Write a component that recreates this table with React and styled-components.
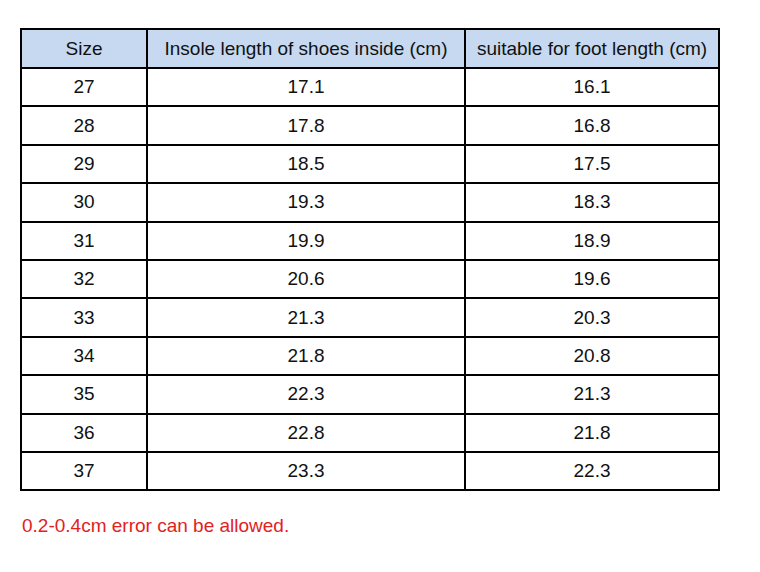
import styled, { createGlobalStyle } from "styled-components";

const GlobalStyle = createGlobalStyle`
body {
  margin: 0;
  background: #fff;
  font-family: "Liberation Sans", Arial, sans-serif;
}
`;

const rows = [
  ["27", "17.1", "16.1"],
  ["28", "17.8", "16.8"],
  ["29", "18.5", "17.5"],
  ["30", "19.3", "18.3"],
  ["31", "19.9", "18.9"],
  ["32", "20.6", "19.6"],
  ["33", "21.3", "20.3"],
  ["34", "21.8", "20.8"],
  ["35", "22.3", "21.3"],
  ["36", "22.8", "21.8"],
  ["37", "23.3", "22.3"],
];

function App() {
  return (
    <Page>
      <GlobalStyle />
      <Table>
        <colgroup>
          <col style={{ width: 126 }} />
          <col style={{ width: 318 }} />
          <col style={{ width: 254 }} />
        </colgroup>
        <thead>
          <HeadRow>
            <Th>Size</Th>
            <Th>Insole length of shoes inside (cm)</Th>
            <Th>suitable for foot length (cm)</Th>
          </HeadRow>
        </thead>
        <tbody>
          {rows.map((r) => (
            <Row key={r[0]}>
              {r.map((c, i) => (
                <Td key={i}>{c}</Td>
              ))}
            </Row>
          ))}
        </tbody>
      </Table>
      <Note>0.2-0.4cm error can be allowed.</Note>
    </Page>
  );
}

export default App;

const Page = styled.div`
  padding: 28px 0 0 20px;
`;
const Table = styled.table`
  border-collapse: collapse;
  table-layout: fixed;
  width: 699px;
  border: 2px solid #000;
`;
const HeadRow = styled.tr`
  height: 39px;
  background: #c6d9f1;
`;
const Row = styled.tr`
  height: 38.4px;
`;
const Th = styled.th`
  border: 2px solid #000;
  padding: 0;
  font-weight: normal;
  font-size: 19px;
  color: #111;
  text-align: center;
  vertical-align: middle;
`;
const Td = styled.td`
  border: 2px solid #000;
  padding: 0;
  font-size: 19px;
  color: #111;
  text-align: center;
  vertical-align: middle;
`;
const Note = styled.p`
  margin: 24px 0 0 2px;
  font-size: 19px;
  color: #e3211d;
`;
